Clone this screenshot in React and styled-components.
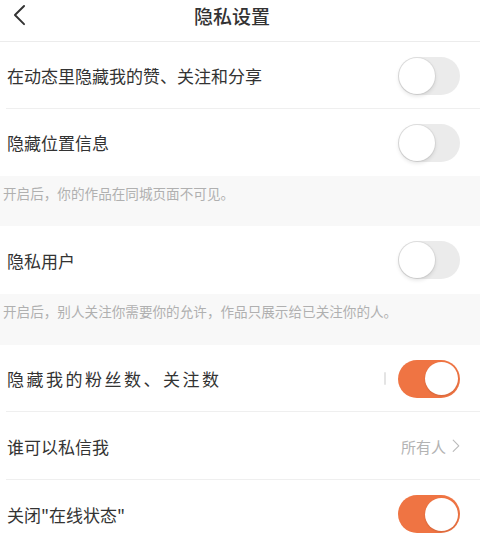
import React from "react";
import styled, { createGlobalStyle } from "styled-components";

const Global = createGlobalStyle`
  html, body { margin: 0; padding: 0; background: #fff; }
  body { font-family: "Noto Sans CJK SC", "Noto Sans", sans-serif; -webkit-font-smoothing: antialiased; }
  * { box-sizing: border-box; }
`;

const Page = styled.div`
  width: 480px;
  background: #fff;
  display: flex;
  flex-direction: column;
`;

const Header = styled.header`
  height: 42px;
  border-bottom: 1px solid #ececec;
  display: flex;
  align-items: flex-start;
`;

const Back = styled.button`
  width: 40px;
  height: 32px;
  border: 0;
  background: transparent;
  padding: 4px 0 0 13px;
  display: flex;
  align-items: flex-start;
  cursor: pointer;
`;

const Title = styled.h1`
  flex: 1;
  margin: 0;
  padding-right: 56px;
  text-align: center;
  font-size: 19px;
  font-weight: 500;
  color: #333;
  line-height: 32px;
`;

const Row = styled.div`
  height: ${(p) => (p.$tall ? 68 : 67)}px;
  display: flex;
  align-items: center;
  justify-content: space-between;
  padding: 0 20px 0 7px;
  position: relative;
  &::after {
    content: "";
    display: ${(p) => (p.$divider ? "block" : "none")};
    position: absolute;
    left: 6px;
    right: 0;
    bottom: 0;
    height: 1px;
    background: #efefef;
  }
`;

const Label = styled.span`
  font-size: 17px;
  color: #333;
  letter-spacing: ${(p) => p.$spacing || 0}px;
`;

const Note = styled.div`
  height: ${(p) => p.$h}px;
  background: #f8f8f8;
  padding: 8px 0 0 3px;
  font-size: 13.6px;
  line-height: 18px;
  color: #b0b0b0;
`;

const Right = styled.div`
  display: flex;
  align-items: center;
`;

const Ghost = styled.span`
  width: 2px;
  height: 13px;
  background: #e4e4e4;
  border-radius: 1px;
  margin-right: 12px;
`;

const Track = styled.span`
  width: 62px;
  height: 38px;
  border-radius: 19px;
  background: ${(p) => (p.$on ? "#ef7443" : "#ebebeb")};
  position: relative;
  display: inline-block;
`;

const Knob = styled.span`
  position: absolute;
  top: ${(p) => (p.$on ? 2.5 : 1)}px;
  left: ${(p) => (p.$on ? 26.5 : 1)}px;
  width: ${(p) => (p.$on ? 33 : 36)}px;
  height: ${(p) => (p.$on ? 33 : 36)}px;
  border-radius: 50%;
  background: #fff;
  box-shadow: ${(p) =>
    p.$on ? "0 1px 2px rgba(0,0,0,0.12)" : "0 0 0 1px rgba(0,0,0,0.05), 0 2px 4px rgba(0,0,0,0.12)"};
`;

const Value = styled.span`
  font-size: 15px;
  color: #b3b3b3;
  margin-right: 6px;
`;

const Toggle = ({ on }) => (
  <Track $on={on}>
    <Knob $on={on} />
  </Track>
);

const Chevron = ({ size = 14, color = "#bbb", dir = "right", stroke = 1.5 }) => (
  <svg width={size} height={size * 1.7} viewBox="0 0 10 17" fill="none">
    <path
      d={dir === "right" ? "M1.5 1.5 L8.5 8.5 L1.5 15.5" : "M8.5 1.5 L1.5 8.5 L8.5 15.5"}
      stroke={color}
      strokeWidth={stroke}
      strokeLinecap="round"
      strokeLinejoin="round"
    />
  </svg>
);

export default function App() {
  return (
    <Page>
      <Global />
      <Header>
        <Back aria-label="返回">
          <Chevron size={13} color="#333" dir="left" stroke={1.5} />
        </Back>
        <Title>隐私设置</Title>
      </Header>

      <Row $divider>
        <Label>在动态里隐藏我的赞、关注和分享</Label>
        <Toggle on={false} />
      </Row>
      <Row>
        <Label>隐藏位置信息</Label>
        <Toggle on={false} />
      </Row>
      <Note $h={50}>开启后，你的作品在同城页面不可见。</Note>

      <Row $tall>
        <Label>隐私用户</Label>
        <Toggle on={false} />
      </Row>
      <Note $h={51}>开启后，别人关注你需要你的允许，作品只展示给已关注你的人。</Note>

      <Row $divider>
        <Label $spacing={2.5}>隐藏我的粉丝数、关注数</Label>
        <Right>
          <Ghost />
          <Toggle on />
        </Right>
      </Row>
      <Row $divider $tall>
        <Label>谁可以私信我</Label>
        <Right>
          <Value>所有人</Value>
          <Chevron size={8} color="#bbb" stroke={1.4} />
        </Right>
      </Row>
      <Row $tall>
        <Label>关闭"在线状态"</Label>
        <Toggle on />
      </Row>
    </Page>
  );
}
